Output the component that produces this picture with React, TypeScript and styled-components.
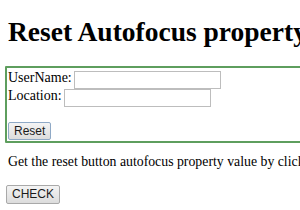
import * as React from 'react'
import styled, { createGlobalStyle } from 'styled-components'

const GlobalStyle = createGlobalStyle`
  html, body {
    margin: 0;
    padding: 0;
    background: #fff;
    overflow: hidden;
  }
  body {
    font-family: "Liberation Serif", "Times New Roman", serif;
    color: #000;
  }
`

export default function App() {
  return (
    <Page>
      <GlobalStyle />
      <Heading>Reset Autofocus property</Heading>

      <FormBox>
        <Row>
          <Label>UserName:</Label>
          <Input type="text" />
        </Row>
        <Row>
          <Label>Location:</Label>
          <Input type="text" />
        </Row>
        <ResetButton type="button" focused>
          Reset
        </ResetButton>
      </FormBox>

      <Text>Get the reset button autofocus property value by clicking the below button.</Text>

      <CheckButton type="button">CHECK</CheckButton>
    </Page>
  )
}

const Page = styled.div`
  width: 300px;
  height: 210px;
  overflow: hidden;
`
const Heading = styled.h1`
  margin: 17px 0 19px 8px;
  font-size: 27.5px;
  line-height: 30px;
  font-weight: bold;
  white-space: nowrap;
`
const FormBox = styled.div`
  width: 400px;
  margin-left: 5px;
  padding: 3px 0 1px 1px;
  border: 2px solid #5e9e5e;
  border-radius: 1px;
`
const Row = styled.div`
  display: flex;
  align-items: flex-start;
  gap: 2px;
  height: 18px;
  font-size: 14px;
`
const Label = styled.span`
  line-height: 14px;
  white-space: nowrap;
`
const Input = styled.input`
  box-sizing: border-box;
  width: 147px;
  height: 18px;
  margin: 0;
  padding: 0 2px;
  border: 1px solid #bdbdbd;
  background: #fff;
  outline: none;
`
const Button = styled.button<{ focused?: boolean }>`
  display: block;
  box-sizing: border-box;
  height: 19px;
  margin: 0;
  padding: 0 5px;
  font-family: "Liberation Sans", Arial, sans-serif;
  font-size: 12px;
  line-height: 17px;
  color: #1a1a1a;
  background: linear-gradient(#f4f4f4, #dcdcdc);
  border: 1px solid ${({ focused }) => (focused ? '#8fa9c6' : '#a9a9a9')};
  border-radius: 2px;
`
const ResetButton = styled(Button)`
  margin-top: 15px;
  height: 18px;
`
const Text = styled.p`
  margin: 11px 0 15px 8px;
  font-size: 13.8px;
  line-height: 16px;
  white-space: nowrap;
`
const CheckButton = styled(Button)`
  margin-left: 6px;
`
